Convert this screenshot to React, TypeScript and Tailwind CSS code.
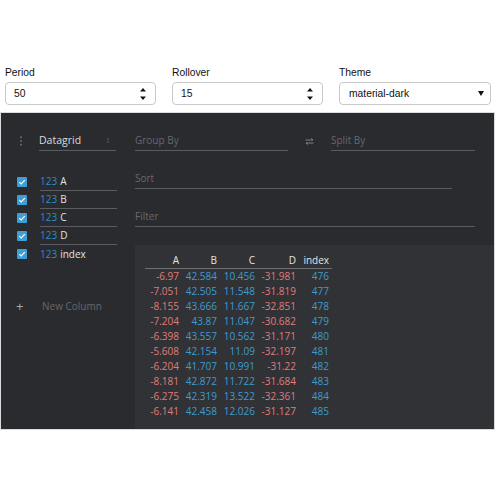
const rows: [string, string, string, string, string][] = [
  ["-6.97", "42.584", "10.456", "-31.981", "476"],
  ["-7.051", "42.505", "11.548", "-31.819", "477"],
  ["-8.155", "43.666", "11.667", "-32.851", "478"],
  ["-7.204", "43.87", "11.047", "-30.682", "479"],
  ["-6.398", "43.557", "10.562", "-31.171", "480"],
  ["-5.608", "42.154", "11.09", "-32.197", "481"],
  ["-6.204", "41.707", "10.991", "-31.22", "482"],
  ["-8.181", "42.872", "11.722", "-31.684", "483"],
  ["-6.275", "42.319", "13.522", "-32.361", "484"],
  ["-6.141", "42.458", "12.026", "-31.127", "485"],
]

const colWidths = ["w-[34px]", "w-[38px]", "w-[38px]", "w-[41px]", "w-[33px]"]

function Spinner() {
  return (
    <svg width="8" height="16" viewBox="0 0 8 16" className="shrink-0">
      <path d="M1 5.5 L4 2 L7 5.5 Z" fill="#111" />
      <path d="M1 10.5 L4 14 L7 10.5 Z" fill="#111" />
    </svg>
  )
}

function NumberField({ label, value }: { label: string; value: string }) {
  return (
    <div className="flex flex-col w-[151px]">
      <label className="h-[14px] leading-[14px] text-[10.3px] text-[#111]">{label}</label>
      <div className="mt-[2px] h-[23px] rounded-[4px] border border-[#c9c9c9] bg-white flex items-center pl-[8px] pr-[8px]">
        <span className="flex-1 text-[10.3px] text-[#111]">{value}</span>
        <Spinner />
      </div>
    </div>
  )
}

function Checkbox() {
  return (
    <div className="w-[10px] h-[10px] rounded-[1px] bg-[#3d9fd8] flex items-center justify-center">
      <svg width="8" height="8" viewBox="0 0 8 8">
        <path d="M1.3 4.1 L3.2 5.9 L6.8 2.2" fill="none" stroke="#fff" strokeWidth="1.2" />
      </svg>
    </div>
  )
}

function ColumnRow({ name, last }: { name: string; last?: boolean }) {
  return (
    <div className="flex items-center h-[18px]">
      <div className="w-[16px]" />
      <Checkbox />
      <div
        className={`ml-[13px] w-[77px] h-[18px] flex items-center ${
          last ? "" : "border-b border-[#5a5c60]"
        }`}
      >
        <span className="text-[#2f8ac4]">123</span>
        <span className="ml-[3px] text-[#e2e2e2]">{name}</span>
      </div>
    </div>
  )
}

export default function App() {
  return (
    <div className="w-[500px] h-[500px] bg-white" style={{ fontFamily: '"Liberation Sans", Arial, sans-serif' }}>
      <div className="pt-[66px] pl-[5px] flex gap-[16px]">
        <NumberField label="Period" value="50" />
        <NumberField label="Rollover" value="15" />
        <div className="flex flex-col w-[152px]">
          <label className="h-[14px] leading-[14px] text-[10.3px] text-[#111]">Theme</label>
          <div className="mt-[2px] h-[23px] rounded-[4px] border border-[#c9c9c9] bg-white flex items-center pl-[9px] pr-[6px]">
            <span className="flex-1 text-[10.3px] text-[#111]">material-dark</span>
            <svg width="6" height="5" viewBox="0 0 6 5">
              <path d="M0 0 L6 0 L3 5 Z" fill="#111" />
            </svg>
          </div>
        </div>
      </div>

      {/* Panel */}
      <div
        className="mt-[7px] w-[495px] h-[318px] border border-[#dcdcdc] bg-[#2a2b2f] flex text-[10px]"
        style={{ fontFamily: '"Open Sans", sans-serif' }}
      >
        {/* Sidebar */}
        <div className="w-[134px] shrink-0 flex flex-col pt-[18px]">
          <div className="flex items-center h-[20px]">
            <div className="w-[38px] flex justify-center pl-[1px]">
              <svg width="4" height="10" viewBox="0 0 4 10">
                <circle cx="2" cy="1.3" r="1" fill="#66686c" />
                <circle cx="2" cy="5" r="1" fill="#66686c" />
                <circle cx="2" cy="8.7" r="1" fill="#66686c" />
              </svg>
            </div>
            <div className="w-[77px] h-[20px] flex items-center border-b border-[#5a5c60] pr-[6px]">
              <span className="flex-1 text-[#dcdcdc] text-[10.5px]">Datagrid</span>
              <svg width="4" height="7" viewBox="0 0 4 7">
                <path d="M0.5 2.8 L2 1 L3.5 2.8 Z" fill="#55575b" />
                <path d="M0.5 4.2 L2 6 L3.5 4.2 Z" fill="#55575b" />
              </svg>
            </div>
          </div>

          <div className="mt-[22px] flex flex-col">
            <ColumnRow name="A" />
            <ColumnRow name="B" />
            <ColumnRow name="C" />
            <ColumnRow name="D" />
            <ColumnRow name="index" last />
          </div>

          <div className="mt-[34px] h-[18px] flex items-center">
            <span className="w-[41px] pl-[15px] text-[#aaa] text-[13px] leading-none">+</span>
            <span className="text-[#66686c]">New Column</span>
          </div>
        </div>

        {/* Main */}
        <div className="flex-1 flex flex-col pt-[18px]">
          <div className="flex items-center h-[20px]">
            <div className="w-[153px] h-[20px] flex items-center border-b border-[#5a5c60] text-[#66686c]">
              Group By
            </div>
            <div className="w-[43px] flex justify-center">
              <svg width="9" height="7" viewBox="0 0 9 7">
                <path d="M0.5 2 H8 M6 0.5 L8 2" fill="none" stroke="#8a8c90" strokeWidth="0.9" />
                <path d="M8.5 5 H1 M3 6.5 L1 5" fill="none" stroke="#8a8c90" strokeWidth="0.9" />
              </svg>
            </div>
            <div className="w-[144px] h-[20px] flex items-center border-b border-[#5a5c60] text-[#66686c]">
              Split By
            </div>
          </div>
          <div className="mt-[18px] w-[317px] h-[20px] flex items-center border-b border-[#5a5c60] text-[#66686c]">
            Sort
          </div>
          <div className="mt-[18px] w-[340px] h-[20px] flex items-center border-b border-[#5a5c60] text-[#66686c]">
            Filter
          </div>

          {/* Datagrid */}
          <div className="mt-[18px] flex-1 bg-[#303236] pt-[8px] pl-[10px]">
            <div className="w-[187px]">
              <div className="flex h-[16px] items-center border-b border-[#6e7074] text-[#e4e4e4]">
                {["A", "B", "C", "D", "index"].map((h, i) => (
                  <div key={h} className={`${colWidths[i]} text-right`}>
                    {h}
                  </div>
                ))}
              </div>
              {rows.map((r) => (
                <div key={r[4]} className="flex h-[15px] items-center">
                  {r.map((v, i) => (
                    <div
                      key={i}
                      className={`${colWidths[i]} text-right ${
                        v.startsWith("-") ? "text-[#e07c79]" : "text-[#3f9bd1]"
                      }`}
                    >
                      {v}
                    </div>
                  ))}
                </div>
              ))}
            </div>
          </div>
        </div>
      </div>
    </div>
  )
}
